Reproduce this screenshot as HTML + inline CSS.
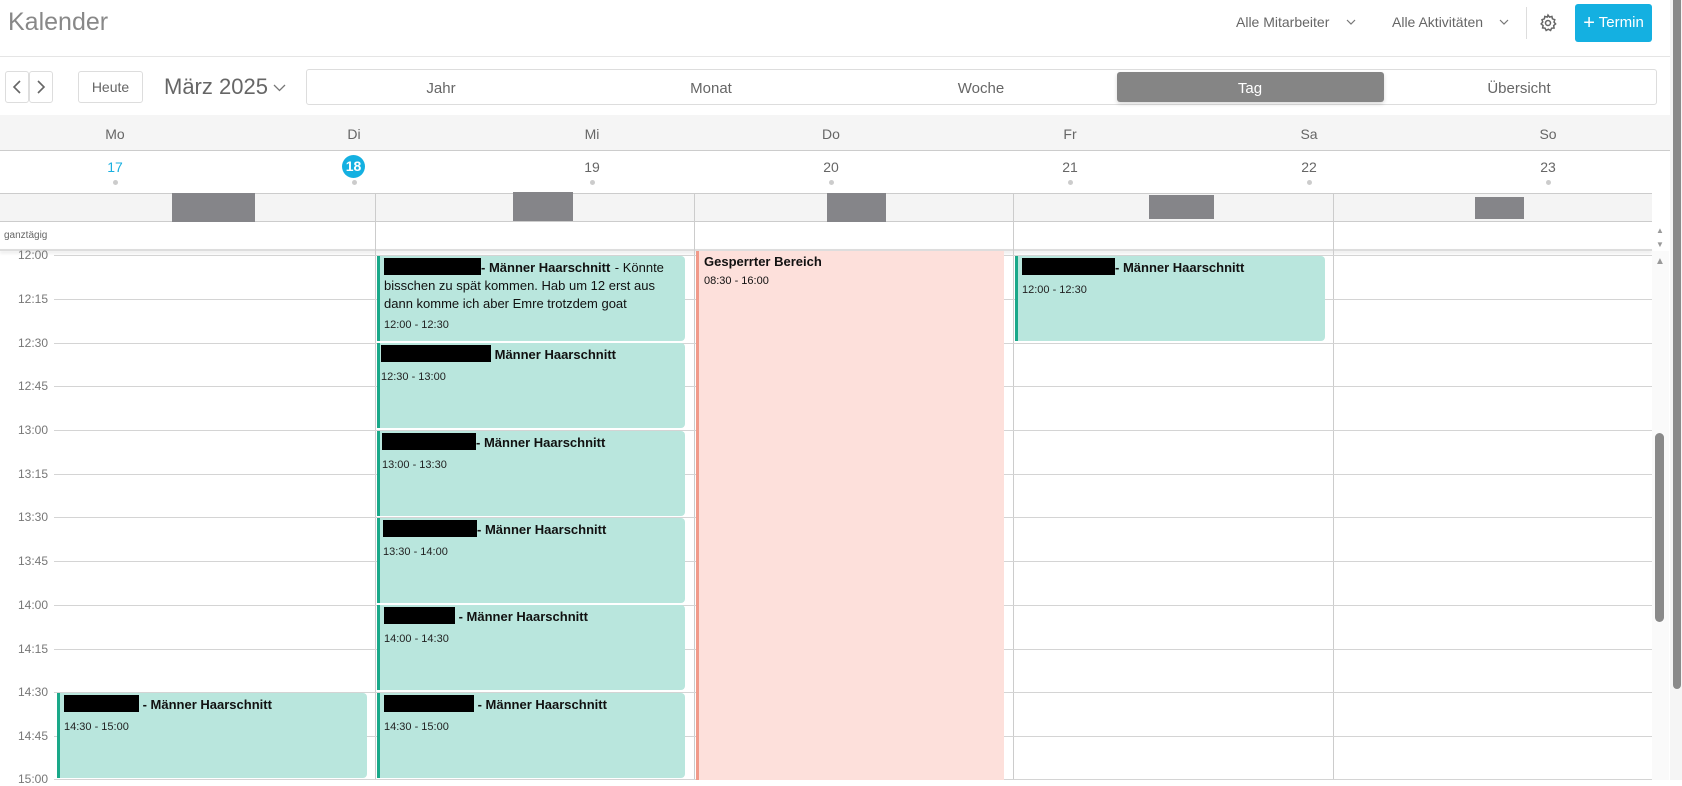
<!DOCTYPE html>
<html><head><meta charset="utf-8"><style>
*{box-sizing:border-box;margin:0;padding:0}
body{width:1682px;height:780px;overflow:hidden;background:#fff;font-family:"Liberation Sans",sans-serif;color:#555;position:relative}
.a{position:absolute}
.btn{position:absolute;border:1px solid #ddd;border-radius:3px;background:#fff}
.seg{position:absolute;top:69px;height:36px;border:1px solid #ddd;border-radius:3px;left:306px;width:1351px}
.sl{position:absolute;top:80px;font-size:15px;color:#666;transform:translateX(-50%)}
.hd{position:absolute;font-size:14px;color:#666;transform:translateX(-50%)}
.dot{position:absolute;width:5px;height:5px;border-radius:50%;background:#ccc;top:180px}
.vl{position:absolute;width:1px;background:#ccc}
.hl{position:absolute;height:1px;background:#d4d4d4;left:54px;width:1598px}
.tl{position:absolute;left:0;width:48px;text-align:right;font-size:12px;color:#777}
.ev{position:absolute;background:#b9e6dd;border-left:3px solid #1aa889;border-radius:0 4px 4px 0;height:85px;padding:2px 4px;color:#111}
.ev b{font-size:13px;font-weight:bold;line-height:15px}
.ev .r{display:inline-block;background:#000;height:17px;vertical-align:-3px}
.ev .t{font-size:11px;margin-top:7px;color:#222}
.gb{position:absolute;background:#858589;top:193px;height:29px}
</style></head><body>
<div class="a" style="left:8px;top:8px;font-size:25px;color:#888">Kalender</div>
<div class="a" style="left:1236px;top:14px;font-size:14px;color:#666">Alle Mitarbeiter</div>
<svg class="a" style="left:1346px;top:19px" width="10" height="7" viewBox="0 0 10 7"><path d="M1 1l4 4 4-4" fill="none" stroke="#777" stroke-width="1.2"/></svg>
<div class="a" style="left:1392px;top:14px;font-size:14px;color:#666">Alle Aktivitäten</div>
<svg class="a" style="left:1499px;top:19px" width="10" height="7" viewBox="0 0 10 7"><path d="M1 1l4 4 4-4" fill="none" stroke="#777" stroke-width="1.2"/></svg>
<div class="a" style="left:1526px;top:7px;width:1px;height:32px;background:#ddd"></div>
<svg class="a" style="left:1538px;top:13px" width="20" height="20" viewBox="0 0 24 24" fill="none" stroke="#666" stroke-width="1.8"><circle cx="12" cy="12" r="3"/><path d="M12 2.5l1.8 2.4 2.9-.8.6 2.9 2.8 1-.9 2.9 1.9 2.2-2.3 1.9.5 3-3 .2-1.2 2.7-2.7-1.4-2.6 1.4-1.3-2.7-3-.3.6-2.9-2.3-1.9 1.9-2.3-.9-2.8 2.8-1 .6-2.9 2.9.8z"/></svg>
<div class="a" style="left:1575px;top:4px;width:77px;height:38px;background:#14b0e1;border-radius:3px;color:#fff;font-size:15px;line-height:38px;text-align:center"><span style="font-size:20px;vertical-align:-2px">+</span> Termin</div>
<div class="a" style="left:0;top:56px;width:1670px;height:1px;background:#e5e5e5"></div>

<div class="btn" style="left:5px;top:71px;width:24px;height:32px"><svg width="22" height="30" viewBox="0 0 22 30"><path d="M14 9l-6 6 6 6" fill="none" stroke="#666" stroke-width="1.6"/></svg></div>
<div class="btn" style="left:29px;top:71px;width:24px;height:32px"><svg width="22" height="30" viewBox="0 0 22 30"><path d="M8 9l6 6-6 6" fill="none" stroke="#666" stroke-width="1.6"/></svg></div>
<div class="btn" style="left:78px;top:71px;width:65px;height:32px;text-align:center;line-height:30px;font-size:14px;color:#666">Heute</div>
<div class="a" style="left:164px;top:74px;font-size:22px;color:#666">März 2025</div>
<svg class="a" style="left:273px;top:84px" width="13" height="8" viewBox="0 0 13 8"><path d="M1 1l5.5 5.5L12 1" fill="none" stroke="#777" stroke-width="1.3"/></svg>
<div class="seg"></div>
<div class="a" style="left:1117px;top:72px;width:267px;height:30px;background:#858585;border-radius:3px;box-shadow:0 2px 4px rgba(0,0,0,.15)"></div>
<div class="sl" style="left:441px">Jahr</div>
<div class="sl" style="left:711px">Monat</div>
<div class="sl" style="left:981px">Woche</div>
<div class="sl" style="left:1250px;color:#fff">Tag</div>
<div class="sl" style="left:1519px">Übersicht</div>

<div class="a" style="left:0;top:115px;width:1670px;height:36px;background:#f5f5f5;border-bottom:1px solid #ccc"></div>
<div class="hd" style="left:115px;top:126px">Mo</div><div class="hd" style="left:354px;top:126px">Di</div><div class="hd" style="left:592px;top:126px">Mi</div><div class="hd" style="left:831px;top:126px">Do</div><div class="hd" style="left:1070px;top:126px">Fr</div><div class="hd" style="left:1309px;top:126px">Sa</div><div class="hd" style="left:1548px;top:126px">So</div>
<div class="hd" style="left:115px;top:159px;color:#1ab0e0">17</div>
<div class="a" style="left:342px;top:155px;width:23px;height:23px;border-radius:50%;background:#14b0e1;color:#fff;font-size:14px;font-weight:bold;text-align:center;line-height:23px">18</div>
<div class="hd" style="left:592px;top:159px">19</div><div class="hd" style="left:831px;top:159px">20</div><div class="hd" style="left:1070px;top:159px">21</div><div class="hd" style="left:1309px;top:159px">22</div><div class="hd" style="left:1548px;top:159px">23</div>
<div class="dot" style="left:113px"></div><div class="dot" style="left:352px"></div><div class="dot" style="left:590px"></div><div class="dot" style="left:829px"></div><div class="dot" style="left:1068px"></div><div class="dot" style="left:1307px"></div><div class="dot" style="left:1546px"></div>

<div class="a" style="left:0;top:193px;width:1652px;height:29px;background:#f4f4f4;border-top:1px solid #ccc;border-bottom:1px solid #ccc"></div>
<div class="gb" style="left:172px;width:83px"></div>
<div class="gb" style="left:513px;width:60px;top:192px"></div>
<div class="gb" style="left:827px;width:59px"></div>
<div class="gb" style="left:1149px;width:65px;top:195px;height:24px"></div>
<div class="gb" style="left:1475px;width:49px;top:197px;height:22px"></div>
<div class="a" style="left:4px;top:230px;font-size:10px;color:#666">ganztägig</div>
<div class="a" style="left:0;top:249px;width:1652px;height:2px;background:#ddd;box-shadow:0 2px 3px rgba(0,0,0,.12)"></div>
<div class="a" style="left:1656px;top:226px;font-size:8px;color:#999">&#9650;</div>
<div class="a" style="left:1656px;top:240px;font-size:8px;color:#999">&#9660;</div>

<div class="vl" style="left:375px;top:193px;height:587px"></div>
<div class="vl" style="left:694px;top:193px;height:587px"></div>
<div class="vl" style="left:1013px;top:193px;height:587px"></div>
<div class="vl" style="left:1333px;top:193px;height:587px"></div>

<div class="hl" style="top:255px"></div><div class="tl" style="top:248px">12:00</div>
<div class="hl" style="top:299px"></div><div class="tl" style="top:292px">12:15</div>
<div class="hl" style="top:343px"></div><div class="tl" style="top:336px">12:30</div>
<div class="hl" style="top:386px"></div><div class="tl" style="top:379px">12:45</div>
<div class="hl" style="top:430px"></div><div class="tl" style="top:423px">13:00</div>
<div class="hl" style="top:474px"></div><div class="tl" style="top:467px">13:15</div>
<div class="hl" style="top:517px"></div><div class="tl" style="top:510px">13:30</div>
<div class="hl" style="top:561px"></div><div class="tl" style="top:554px">13:45</div>
<div class="hl" style="top:605px"></div><div class="tl" style="top:598px">14:00</div>
<div class="hl" style="top:649px"></div><div class="tl" style="top:642px">14:15</div>
<div class="hl" style="top:692px"></div><div class="tl" style="top:685px">14:30</div>
<div class="hl" style="top:736px"></div><div class="tl" style="top:729px">14:45</div>
<div class="hl" style="top:779px"></div><div class="tl" style="top:772px">15:00</div>

<div class="a" style="left:696px;top:251px;width:308px;height:529px;background:#fde0db;border-left:3px solid #f19a8a;padding:3px 5px;color:#111"><div style="font-size:13px;font-weight:bold">Gesperrter Bereich</div><div style="font-size:11px;margin-top:6px">08:30 - 16:00</div></div>

<div class="ev" style="left:377px;top:256px;width:308px"><b><span class="r" style="width:97px"></span>- Männer Haarschnitt</b> <span style="font-size:13px;line-height:14px">- Könnte bisschen zu spät kommen. Hab um 12 erst aus dann komme ich aber Emre trotzdem goat</span><div class="t" style="margin-top:6px">12:00 - 12:30</div></div>
<div class="ev" style="left:377px;top:343px;width:308px;padding-left:1px"><b><span class="r" style="width:110px"></span> Männer Haarschnitt</b><div class="t">12:30 - 13:00</div></div>
<div class="ev" style="left:377px;top:431px;width:308px;padding-left:2px"><b><span class="r" style="width:94px"></span>- Männer Haarschnitt</b><div class="t">13:00 - 13:30</div></div>
<div class="ev" style="left:377px;top:518px;width:308px;padding-left:3px"><b><span class="r" style="width:94px"></span>- Männer Haarschnitt</b><div class="t">13:30 - 14:00</div></div>
<div class="ev" style="left:377px;top:605px;width:308px"><b><span class="r" style="width:71px"></span> - Männer Haarschnitt</b><div class="t">14:00 - 14:30</div></div>
<div class="ev" style="left:377px;top:693px;width:308px;padding-left:4px"><b><span class="r" style="width:90px"></span> - Männer Haarschnitt</b><div class="t">14:30 - 15:00</div></div>
<div class="ev" style="left:57px;top:693px;width:310px"><b><span class="r" style="width:75px"></span> - Männer Haarschnitt</b><div class="t">14:30 - 15:00</div></div>
<div class="ev" style="left:1015px;top:256px;width:310px"><b><span class="r" style="width:93px"></span>- Männer Haarschnitt</b><div class="t">12:00 - 12:30</div></div>

<div class="a" style="left:1652px;top:251px;width:17px;height:529px;background:#fafafa"></div>
<div class="a" style="left:1655px;top:256px;font-size:10px;color:#999">&#9650;</div>
<div class="a" style="left:1655px;top:433px;width:9px;height:189px;border-radius:5px;background:#8a8a8a"></div>
<div class="a" style="left:1670px;top:0;width:12px;height:780px;background:#f5f5f5"></div>
<div class="a" style="left:1673px;top:0;width:8px;height:689px;border-radius:0 0 4px 4px;background:#8a8a8a"></div>
</body></html>
